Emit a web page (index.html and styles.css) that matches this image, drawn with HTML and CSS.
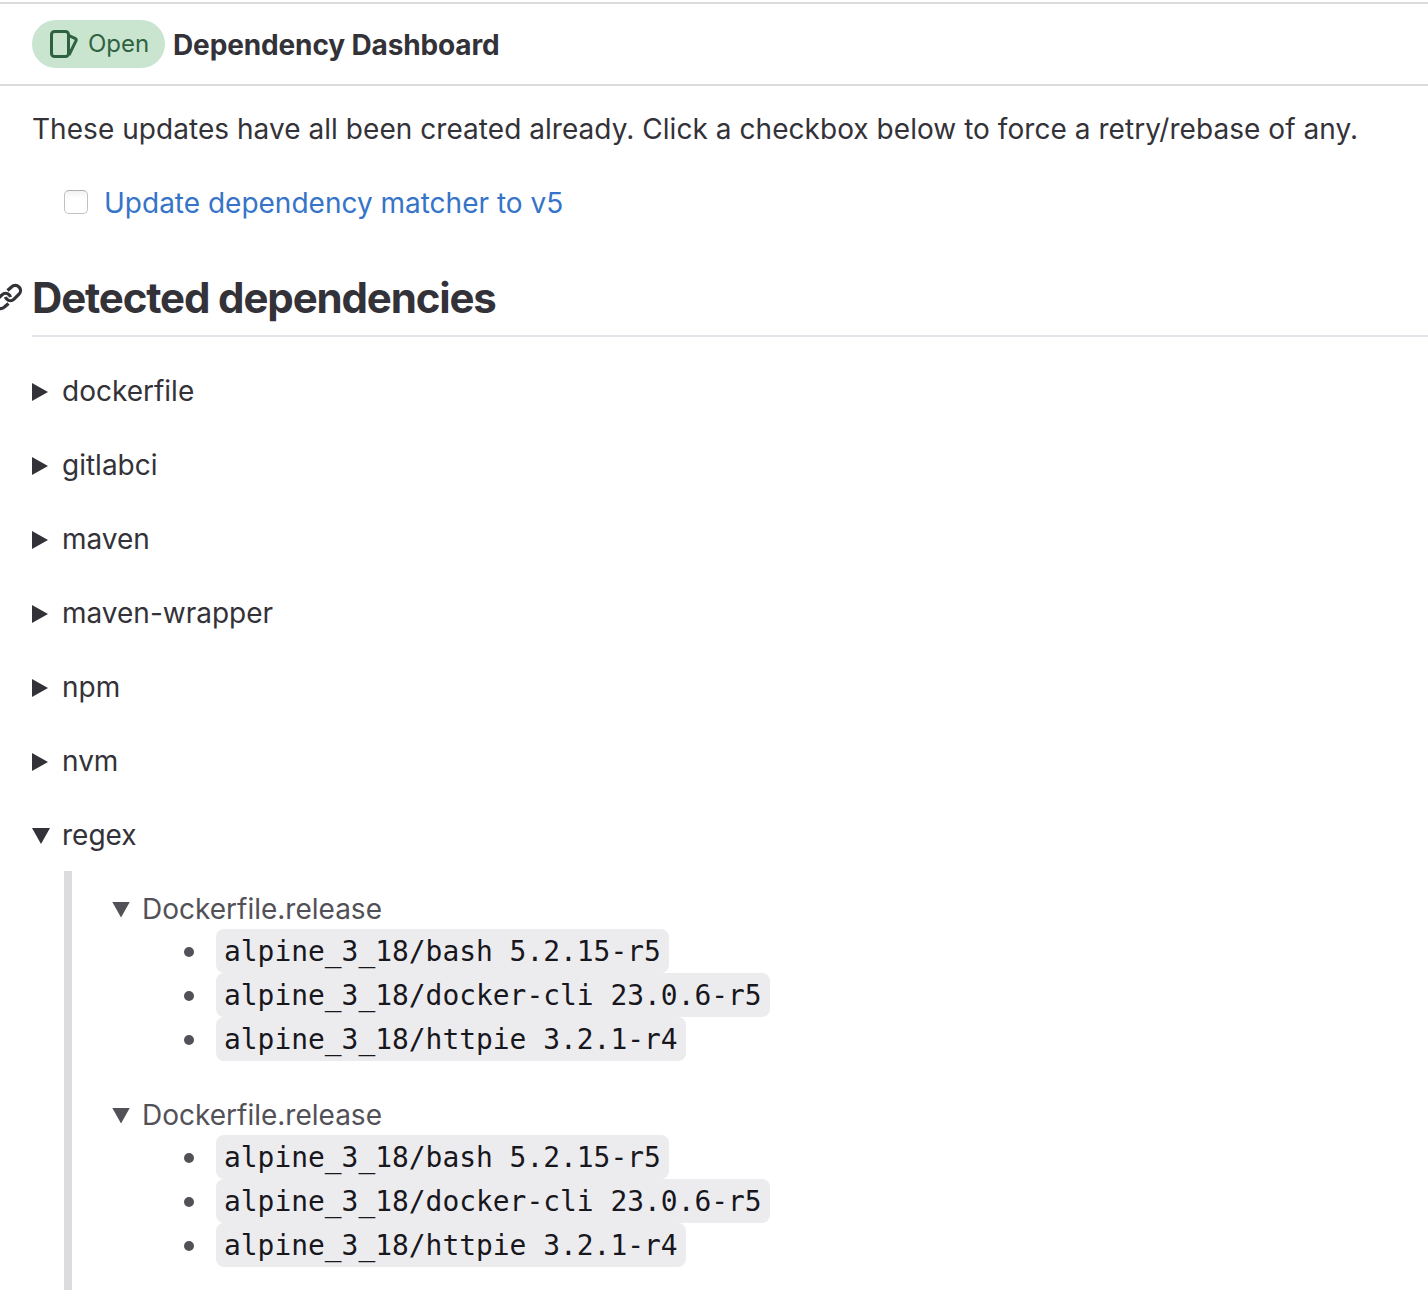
FILE: index.html
```html
<!DOCTYPE html>
<html lang="en">
<head>
<meta charset="utf-8">
<title>Dependency Dashboard</title>
<link rel="stylesheet" href="styles.css">
</head>
<body>
<header class="issue-header">
  <span class="badge"><svg class="badge-icon" viewBox="0 0 32 32" fill="none" stroke="currentColor" stroke-width="3" stroke-linejoin="round"><rect x="3.500" y="3.500" width="17" height="25" rx="3"/><path d="M20.500 7.300l7 3.300q1.100.6.700 1.800L21 27"/></svg><span class="badge-text">Open</span></span>
  <h1 class="title"><span>Dependency Dashboard</span></h1>
</header>
<main class="content">
  <p class="intro"><span>These updates have all been created already. Click a checkbox below to force a retry/rebase of any.</span></p>
  <div class="task"><span class="checkbox"></span><a class="link">Update dependency matcher to v5</a></div>
  <h2 class="section"><svg class="anchor" viewBox="0 0 32 32" fill="none" stroke="currentColor" stroke-width="3.200"><path d="M15.500 9.500L19.500 6a5.100 5.100 0 0 1 7.500 0a5.100 5.100 0 0 1 0 7.200L22 18.200a5.100 5.100 0 0 1-7.200 0q-.9-1-1.200-2.400"/><path d="M16.500 22.500L12.500 26a5.100 5.100 0 0 1-7.500 0a5.100 5.100 0 0 1 0-7.200L10 13.800a5.100 5.100 0 0 1 7.200 0q.9 1 1.200 2.400"/></svg><span>Detected dependencies</span></h2>
  <div class="row"><i class="closed"></i><span>dockerfile</span></div>
  <div class="row"><i class="closed"></i><span>gitlabci</span></div>
  <div class="row"><i class="closed"></i><span>maven</span></div>
  <div class="row"><i class="closed"></i><span>maven-wrapper</span></div>
  <div class="row"><i class="closed"></i><span>npm</span></div>
  <div class="row"><i class="closed"></i><span>nvm</span></div>
  <div class="row"><i class="opened"></i><span>regex</span></div>
  <blockquote class="quote">
    <section class="group">
      <div class="summary"><i class="opened"></i><span>Dockerfile.release</span></div>
      <ul class="deps">
        <li><code>alpine_3_18/bash 5.2.15-r5</code></li>
        <li><code>alpine_3_18/docker-cli 23.0.6-r5</code></li>
        <li><code>alpine_3_18/httpie 3.2.1-r4</code></li>
      </ul>
    </section>
    <section class="group">
      <div class="summary"><i class="opened"></i><span>Dockerfile.release</span></div>
      <ul class="deps">
        <li><code>alpine_3_18/bash 5.2.15-r5</code></li>
        <li><code>alpine_3_18/docker-cli 23.0.6-r5</code></li>
        <li><code>alpine_3_18/httpie 3.2.1-r4</code></li>
      </ul>
    </section>
  </blockquote>
</main>
</body>
</html>
```
FILE: styles.css
```css
* { box-sizing: border-box; }
html { overflow: hidden; }
body { margin: 0; height: 1290px; overflow: hidden; background: #fff; color: #333238; font: 28px/42px Inter, sans-serif; white-space: nowrap; }
.issue-header { height: 84px; margin-top: 2px; border-top: 2px solid #dcdcde; border-bottom: 2px solid #dcdcde; display: flex; align-items: center; padding-left: 32px; gap: 8px; }
.badge { width: 133px; height: 48px; border-radius: 24px; background: #c9e5d0; color: #2f6340; display: flex; align-items: center; padding-left: 16px; gap: 8px; font-size: 24px; }
.badge-icon { width: 32px; height: 32px; }
.title { margin: 0; padding-top: 2px; font-size: 28px; font-weight: 650; letter-spacing: -0.13px; line-height: 42px; }
.content { padding-left: 32px; }
.intro { margin: 22px 0 32px; letter-spacing: 0.045px; }
.task { display: flex; align-items: center; gap: 16px; padding-left: 32px; height: 42px; }
.checkbox { width: 24px; height: 24px; margin-bottom: 2px; border: 1px solid #c2c2c2; border-top-color: #b0b0b0; border-radius: 5px; background: linear-gradient(#f2f2f2, #fff 35%); }
.link { color: #3574c8; }
.section { position: relative; margin: 47px 0 33px; height: 66px; border-bottom: 2px solid #e4e4ea; font-size: 42px; line-height: 54px; font-weight: 650; letter-spacing: -1.15px; }
.anchor { position: absolute; left: -40px; top: 10px; width: 32px; height: 32px; }
.row { display: flex; align-items: center; height: 42px; margin-bottom: 32px; }
.closed, .opened { flex: none; background: currentColor; margin-top: 2px; }
.closed { width: 16px; height: 18px; margin-right: 14px; clip-path: polygon(0 0, 100% 50%, 0 100%); }
.opened { width: 18px; height: 16px; margin-right: 12px; clip-path: polygon(0 0, 100% 0, 50% 100%); }
.quote { margin: -17px 0 0 32px; border-left: 8px solid #dcdcde; padding: 17px 0 40px 40px; color: #535158; }
.summary { display: flex; align-items: center; height: 41px; }
.group + .group { margin-top: 33px; }
.deps { list-style: none; margin: 0; padding: 0 0 0 72px; }
.deps li { display: flex; align-items: center; height: 44px; gap: 22px; }
.deps li::before { content: ""; width: 10px; height: 10px; margin-top: 2px; border-radius: 50%; background: #535158; }
code { height: 44px; padding: 1px 8px 0; border-radius: 8px; background: #ececef; color: #18171d; font: 27.92px/44px "DejaVu Sans Mono", monospace; }
```
